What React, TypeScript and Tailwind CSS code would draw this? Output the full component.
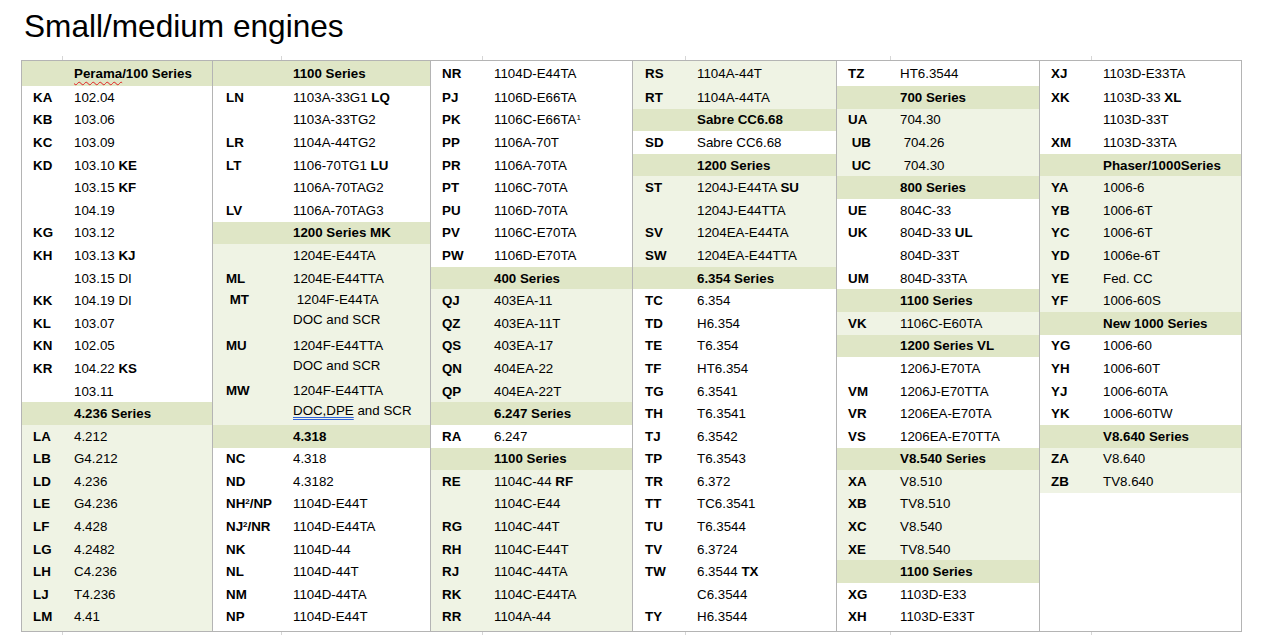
import React from "react";

type Item =
  | { kind: "h"; text: React.ReactNode }
  | { kind: "r"; g: boolean; code?: React.ReactNode; model?: React.ReactNode; line2?: React.ReactNode };

const B = ({ children }: { children: React.ReactNode }) => <span className="font-bold">{children}</span>;
const Sup = ({ children }: { children: React.ReactNode }) => (
  <sup className="text-[8px] font-bold">{children}</sup>
);

const h = (text: React.ReactNode): Item => ({ kind: "h", text });
const rows = (g: boolean, list: Array<[React.ReactNode, React.ReactNode, React.ReactNode?]>): Item[] =>
  list.map(([code, model, line2]) => ({ kind: "r", g, code, model, line2 }));

type Col = {
  w: string;
  border: string;
  pl: string;
  cw: string;
  hpl: string;
  fill: string;
  tick: string;
  items: Item[];
};

const columns: Col[] = [
  {
    w: "w-[190px]",
    border: "",
    pl: "pl-[11px]",
    cw: "w-[41px]",
    hpl: "pl-[52px]",
    fill: "bg-[#eff3e4]",
    tick: "left-[40px]",
    items: [
      h(
        <>
          <span className="underline decoration-wavy decoration-[#e02020] decoration-1 underline-offset-[3px]">Perama</span>
          /100 Series
        </>
      ),
      ...rows(false, [
        ["KA", "102.04"],
        ["KB", "103.06"],
        ["KC", "103.09"],
        ["KD", <>103.10 <B>KE</B></>],
        ["", <>103.15 <B>KF</B></>],
        ["", "104.19"],
        ["KG", "103.12"],
        ["KH", <>103.13 <B>KJ</B></>],
        ["", "103.15 DI"],
        ["KK", "104.19 DI"],
        ["KL", "103.07"],
        ["KN", "102.05"],
        ["KR", <>104.22 <B>KS</B></>],
        ["", "103.11"],
      ]),
      h("4.236 Series"),
      ...rows(true, [
        ["LA", "4.212"],
        ["LB", "G4.212"],
        ["LD", "4.236"],
        ["LE", "G4.236"],
        ["LF", "4.428"],
        ["LG", "4.2482"],
        ["LH", "C4.236"],
        ["LJ", "T4.236"],
        ["LM", "4.41"],
      ]),
    ],
  },
  {
    w: "w-[218px]",
    border: "border-l border-[#b4b4b4]",
    pl: "pl-[13px]",
    cw: "w-[67px]",
    hpl: "pl-[80px]",
    fill: "bg-white",
    tick: "left-[68px]",
    items: [
      h("1100 Series"),
      ...rows(false, [
        ["LN", <>1103A-33G1 <B>LQ</B></>],
        ["", "1103A-33TG2"],
        ["LR", "1104A-44TG2"],
        ["LT", <>1106-70TG1 <B>LU</B></>],
        ["", "1106A-70TAG2"],
        ["LV", "1106A-70TAG3"],
      ]),
      h("1200 Series MK"),
      ...rows(true, [
        ["", "1204E-E44TA"],
        ["ML", "1204E-E44TTA"],
        [" MT", " 1204F-E44TA", "DOC and SCR"],
        ["MU", "1204F-E44TTA", "DOC and SCR"],
        [
          "MW",
          "1204F-E44TTA",
          <>
            <span className="underline decoration-double decoration-[#2f62d8] underline-offset-[2px]">DOC,DPE</span> and SCR
          </>,
        ],
      ]),
      h("4.318"),
      ...rows(false, [
        ["NC", "4.318"],
        ["ND", "4.3182"],
        [<>NH<Sup>2</Sup>/NP</>, "1104D-E44T"],
        [<>NJ<Sup>2</Sup>/NR</>, "1104D-E44TA"],
        ["NK", "1104D-44"],
        ["NL", "1104D-44T"],
        ["NM", "1104D-44TA"],
        ["NP", "1104D-E44T"],
      ]),
    ],
  },
  {
    w: "w-[202px]",
    border: "border-l border-[#b4b4b4]",
    pl: "pl-[11px]",
    cw: "w-[52px]",
    hpl: "pl-[63px]",
    fill: "bg-[#eff3e4]",
    tick: "left-[51px]",
    items: [
      ...rows(false, [
        ["NR", "1104D-E44TA"],
        ["PJ", "1106D-E66TA"],
        ["PK", <>1106C-E66TA<sup className="text-[8px]">1</sup></>],
        ["PP", "1106A-70T"],
        ["PR", "1106A-70TA"],
        ["PT", "1106C-70TA"],
        ["PU", "1106D-70TA"],
        ["PV", "1106C-E70TA"],
        ["PW", "1106D-E70TA"],
      ]),
      h("400 Series"),
      ...rows(true, [
        ["QJ", "403EA-11"],
        ["QZ", "403EA-11T"],
        ["QS", "403EA-17"],
        ["QN", "404EA-22"],
        ["QP", "404EA-22T"],
      ]),
      h("6.247 Series"),
      ...rows(false, [["RA", "6.247"]]),
      h("1100 Series"),
      ...rows(true, [
        ["RE", <>1104C-44 <B>RF</B></>],
        ["", "1104C-E44"],
        ["RG", "1104C-44T"],
        ["RH", "1104C-E44T"],
        ["RJ", "1104C-44TA"],
        ["RK", "1104C-E44TA"],
        ["RR", "1104A-44"],
      ]),
    ],
  },
  {
    w: "w-[204px]",
    border: "border-l border-[#b4b4b4]",
    pl: "pl-[12px]",
    cw: "w-[52px]",
    hpl: "pl-[64px]",
    fill: "bg-white",
    tick: "left-[52px]",
    items: [
      ...rows(true, [
        ["RS", "1104A-44T"],
        ["RT", "1104A-44TA"],
      ]),
      h("Sabre CC6.68"),
      ...rows(false, [["SD", "Sabre CC6.68"]]),
      h("1200 Series"),
      ...rows(true, [
        ["ST", <>1204J-E44TA <B>SU</B></>],
        ["", "1204J-E44TTA"],
        ["SV", "1204EA-E44TA"],
        ["SW", "1204EA-E44TTA"],
      ]),
      h("6.354 Series"),
      ...rows(false, [
        ["TC", "6.354"],
        ["TD", "H6.354"],
        ["TE", "T6.354"],
        ["TF", "HT6.354"],
        ["TG", "6.3541"],
        ["TH", "T6.3541"],
        ["TJ", "6.3542"],
        ["TP", "T6.3543"],
        ["TR", "6.372"],
        ["TT", "TC6.3541"],
        ["TU", "T6.3544"],
        ["TV", "6.3724"],
        ["TW", <>6.3544 <B>TX</B></>],
        ["", "C6.3544"],
        ["TY", "H6.3544"],
      ]),
    ],
  },
  {
    w: "w-[203px]",
    border: "border-l border-[#b4b4b4]",
    pl: "pl-[11px]",
    cw: "w-[52px]",
    hpl: "pl-[63px]",
    fill: "bg-white",
    tick: "left-[53px]",
    items: [
      ...rows(false, [["TZ", "HT6.3544"]]),
      h("700 Series"),
      ...rows(true, [
        ["UA", "704.30"],
        [" UB", " 704.26"],
        [" UC", " 704.30"],
      ]),
      h("800 Series"),
      ...rows(false, [
        ["UE", "804C-33"],
        ["UK", <>804D-33 <B>UL</B></>],
        ["", "804D-33T"],
        ["UM", "804D-33TA"],
      ]),
      h("1100 Series"),
      ...rows(true, [["VK", "1106C-E60TA"]]),
      h("1200 Series VL"),
      ...rows(false, [
        ["", "1206J-E70TA"],
        ["VM", "1206J-E70TTA"],
        ["VR", "1206EA-E70TA"],
        ["VS", "1206EA-E70TTA"],
      ]),
      h("V8.540 Series"),
      ...rows(true, [
        ["XA", "V8.510"],
        ["XB", "TV8.510"],
        ["XC", "V8.540"],
        ["XE", "TV8.540"],
      ]),
      h("1100 Series"),
      ...rows(false, [
        ["XG", "1103D-E33"],
        ["XH", "1103D-E33T"],
      ]),
    ],
  },
  {
    w: "w-[202px]",
    border: "border-l border-[#b4b4b4]",
    pl: "pl-[11px]",
    cw: "w-[52px]",
    hpl: "pl-[63px]",
    fill: "bg-white",
    tick: "left-[51px]",
    items: [
      ...rows(false, [
        ["XJ", "1103D-E33TA"],
        ["XK", <>1103D-33 <B>XL</B></>],
        ["", "1103D-33T"],
        ["XM", "1103D-33TA"],
      ]),
      h("Phaser/1000Series"),
      ...rows(true, [
        ["YA", "1006-6"],
        ["YB", "1006-6T"],
        ["YC", "1006-6T"],
        ["YD", "1006e-6T"],
        ["YE", "Fed. CC"],
        ["YF", "1006-60S"],
      ]),
      h("New 1000 Series"),
      ...rows(false, [
        ["YG", "1006-60"],
        ["YH", "1006-60T"],
        ["YJ", "1006-60TA"],
        ["YK", "1006-60TW"],
      ]),
      h("V8.640 Series"),
      ...rows(true, [
        ["ZA", "V8.640"],
        ["ZB", "TV8.640"],
      ]),
    ],
  },
];

function Column({ col }: { col: Col }) {
  return (
    <div className={`relative flex h-[570px] flex-col ${col.w} ${col.border}`}>
      {col.items.map((it, i) => {
        const hgt = i === 0 ? "h-[25px]" : "h-[22.6px]";
        if (it.kind === "h") {
          return (
            <div key={i} className={`flex ${hgt} shrink-0 items-center pt-[1px] bg-[#dfe6c6] ${col.hpl} font-bold`}>
              <span className="whitespace-pre">{it.text}</span>
            </div>
          );
        }
        const bg = it.g ? "bg-[#eff3e4]" : "bg-white";
        if (it.line2) {
          return (
            <div key={i} className={`flex h-[45.2px] shrink-0 items-start pt-[1px] leading-[20px] ${bg} ${col.pl}`}>
              <div className={`${col.cw} shrink-0 whitespace-pre font-bold`}>{it.code}</div>
              <div className="flex flex-col whitespace-pre">
                <span>{it.model}</span>
                <span>{it.line2}</span>
              </div>
            </div>
          );
        }
        return (
          <div key={i} className={`flex ${hgt} shrink-0 items-center pt-[1px] ${bg} ${col.pl}`}>
            <div className={`${col.cw} shrink-0 whitespace-pre font-bold`}>{it.code}</div>
            <div className="whitespace-pre">{it.model}</div>
          </div>
        );
      })}
      <div className={`flex-1 ${col.fill}`} />
      <span className={`absolute top-[-5px] h-[4px] w-px bg-[#d6d6d6] ${col.tick}`} />
      <span className={`absolute bottom-[-4px] h-[3px] w-px bg-[#d6d6d6] ${col.tick}`} />
    </div>
  );
}

export default function App() {
  return (
    <div
      className="h-[642px] w-[1266px] overflow-hidden bg-white text-black"
      style={{ fontFamily: '"Liberation Sans", Arial, sans-serif' }}
    >
      <h1 className="pl-[24px] pt-[8px] text-[31.6px] leading-[37px] font-normal">Small/medium engines</h1>
      <div className="ml-[21px] mt-[15px] flex w-[1221px] border border-[#b4b4b4] text-[13.33px] leading-[16px]">
        {columns.map((c, i) => (
          <Column key={i} col={c} />
        ))}
      </div>
    </div>
  );
}
